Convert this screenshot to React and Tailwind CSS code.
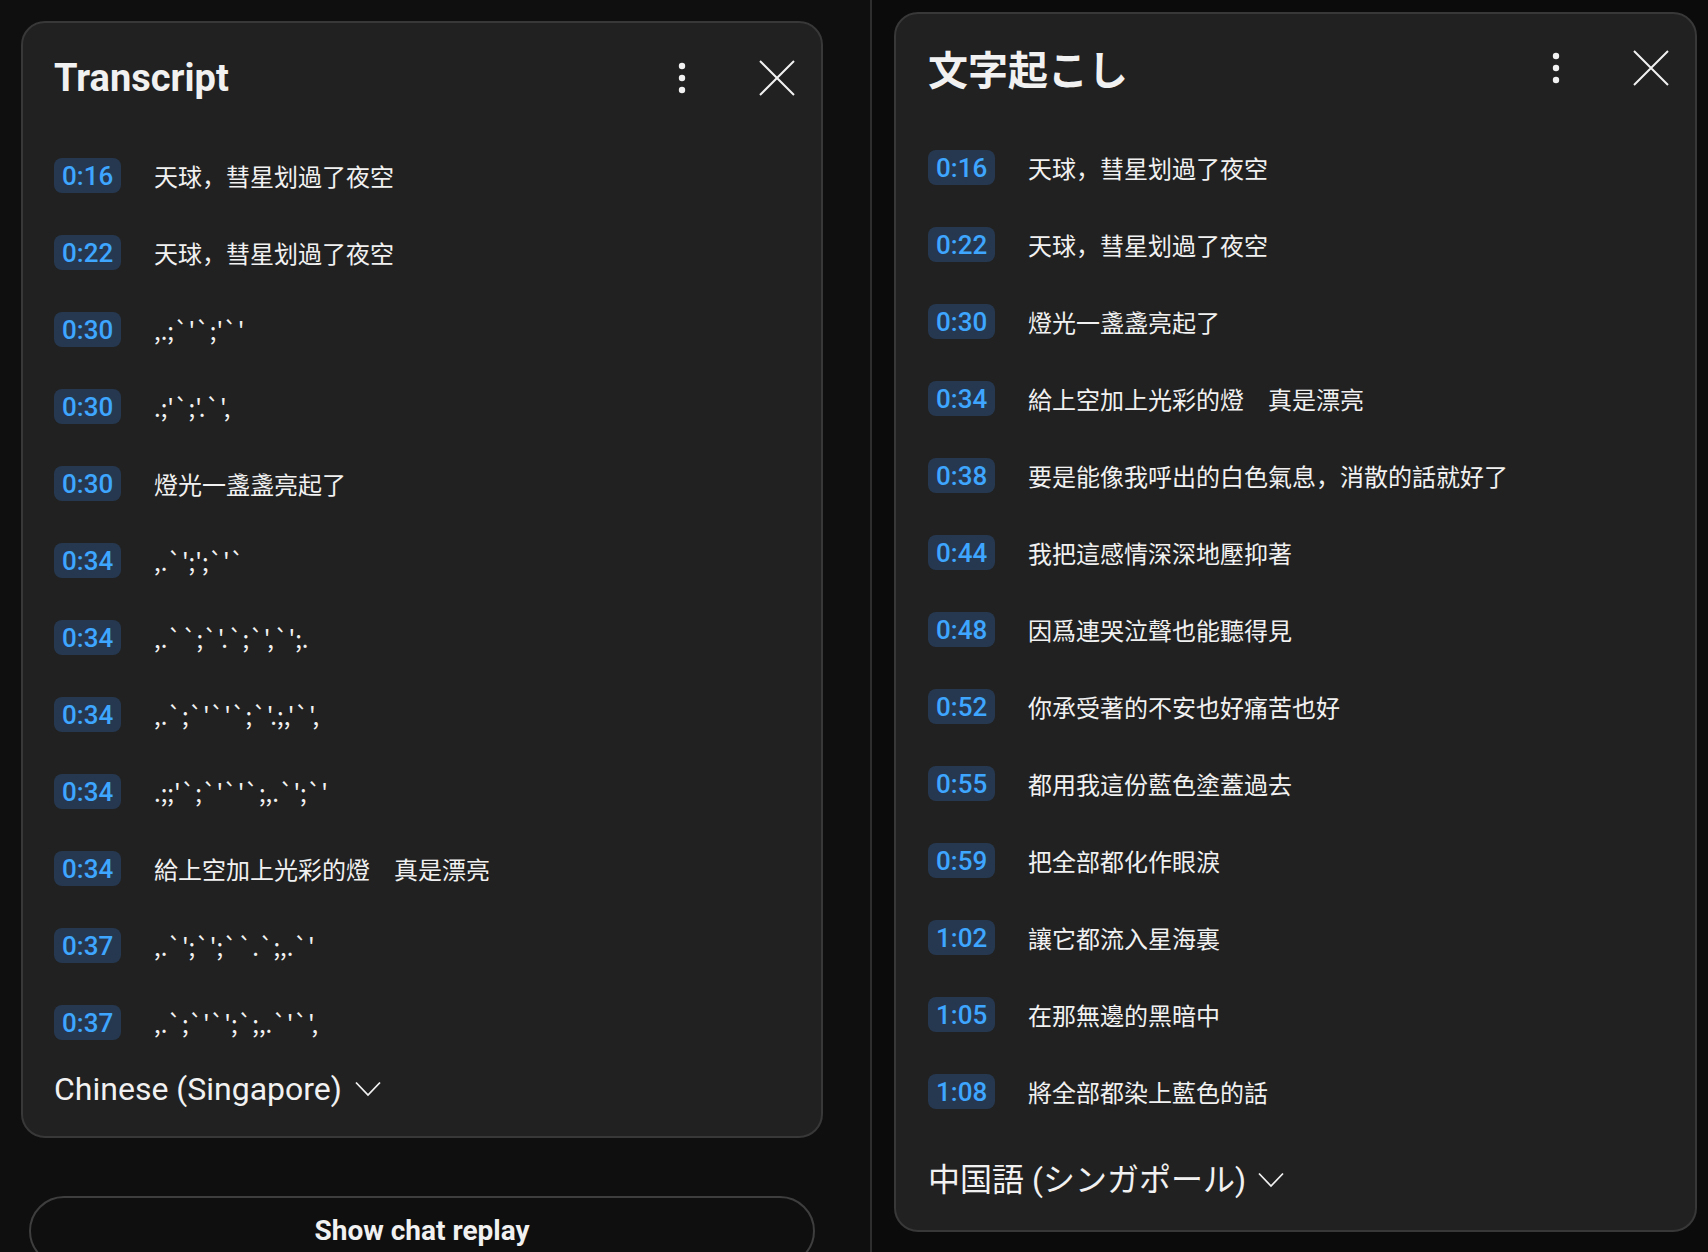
import React from "react";

const leftRows = [
  { t: "0:16", s: "天球，彗星划過了夜空" },
  { t: "0:22", s: "天球，彗星划過了夜空" },
  { t: "0:30", s: ",.;`'`;'`'", odd: true },
  { t: "0:30", s: ".;'`;'.`',", odd: true },
  { t: "0:30", s: "燈光一盞盞亮起了" },
  { t: "0:34", s: ",.`';';`'`", odd: true },
  { t: "0:34", s: ",.``;`'.`;`',`';.", odd: true },
  { t: "0:34", s: ",.`;`'`'`;`'.;,'`',", odd: true },
  { t: "0:34", s: ".;;'`;`'`'`;,.`';`'", odd: true },
  { t: "0:34", s: "給上空加上光彩的燈　真是漂亮" },
  { t: "0:37", s: ",.`';`';``.`;,.`'", odd: true },
  { t: "0:37", s: ",.`;`'`';`;,.`'`',", odd: true },
];

const rightRows = [
  { t: "0:16", s: "天球，彗星划過了夜空" },
  { t: "0:22", s: "天球，彗星划過了夜空" },
  { t: "0:30", s: "燈光一盞盞亮起了" },
  { t: "0:34", s: "給上空加上光彩的燈　真是漂亮" },
  { t: "0:38", s: "要是能像我呼出的白色氣息，消散的話就好了" },
  { t: "0:44", s: "我把這感情深深地壓抑著" },
  { t: "0:48", s: "因爲連哭泣聲也能聽得見" },
  { t: "0:52", s: "你承受著的不安也好痛苦也好" },
  { t: "0:55", s: "都用我這份藍色塗蓋過去" },
  { t: "0:59", s: "把全部都化作眼淚" },
  { t: "1:02", s: "讓它都流入星海裏" },
  { t: "1:05", s: "在那無邊的黑暗中" },
  { t: "1:08", s: "將全部都染上藍色的話" },
];

function Dots() {
  return (
    <svg width="10" height="34" viewBox="0 0 10 34">
      <circle cx="5" cy="5" r="3.2" fill="#f1f1f1" />
      <circle cx="5" cy="17" r="3.2" fill="#f1f1f1" />
      <circle cx="5" cy="29" r="3.2" fill="#f1f1f1" />
    </svg>
  );
}

function Close() {
  return (
    <svg width="36" height="36" viewBox="0 0 36 36">
      <path d="M1 1L35 35M35 1L1 35" stroke="#f1f1f1" strokeWidth="2" />
    </svg>
  );
}

function Chevron() {
  return (
    <svg width="26" height="16" viewBox="0 0 26 16">
      <path d="M1 1.5L13 14L25 1.5" fill="none" stroke="#f1f1f1" strokeWidth="1.8" />
    </svg>
  );
}

function Row({ row }) {
  return (
    <div className="flex items-center h-[77px]">
      <div className="w-[100px] flex">
        <span className="h-[35px] px-[8px] rounded-[8px] bg-[#263850] text-[#3ea6ff] text-[26px] font-medium leading-none flex items-center font-['Roboto',sans-serif]">
          {row.t}
        </span>
      </div>
      <span className="text-[24px] text-[#f1f1f1] font-['Noto_Sans_CJK_SC',sans-serif]">
        {row.s}
      </span>
    </div>
  );
}

function Header({ title, titleClass, height }) {
  return (
    <div className={`flex items-center ${height}`}>
      <h2 className={titleClass}>{title}</h2>
      <div className="flex-1" />
      <div className="w-[40px] flex justify-center">
        <Dots />
      </div>
      <div className="w-[40px] ml-[55px] flex justify-center">
        <Close />
      </div>
    </div>
  );
}

export default function App() {
  return (
    <div className="w-[1708px] h-[1252px] overflow-hidden flex bg-[#0f0f0f]">
      <div className="w-[870px] pt-[21px] pl-[21px] flex flex-col">
        <div className="w-[802px] rounded-[24px] border-2 border-[#383838] bg-[#212121] pl-[31px] pr-[24px] pb-[19px]">
          <Header
            title="Transcript"
            height="h-[110px]"
            titleClass="text-[38px] font-bold text-[#f1f1f1] font-['Roboto',sans-serif] leading-none"
          />
          <div className="pt-[4px]">
            {leftRows.map((r, i) => (
              <Row key={i} row={r} />
            ))}
          </div>
          <div className="h-[56px] flex items-center gap-[13px]">
            <span className="text-[32px] text-[#f1f1f1] font-['Roboto',sans-serif]">
              Chinese (Singapore)
            </span>
            <Chevron />
          </div>
        </div>
        <button className="mt-[58px] ml-[8px] w-[786px] h-[70px] shrink-0 rounded-full border-2 border-[#3e3e3e] text-[28px] font-bold text-[#f1f1f1] font-['Roboto',sans-serif]">
          Show chat replay
        </button>
      </div>
      <div className="w-[2px] bg-[#2e2e2e]" />
      <div className="flex-1 bg-[#0b0b0b] pt-[12px] pl-[22px]">
        <div className="w-[803px] rounded-[24px] border-2 border-[#383838] bg-[#212121] pl-[32px] pr-[24px]">
          <Header
            title="文字起こし"
            height="h-[108px]"
            titleClass="text-[40px] font-bold text-[#f1f1f1] font-['Noto_Sans_CJK_JP',sans-serif] leading-none"
          />
          <div className="pt-[7px]">
            {rightRows.map((r, i) => (
              <Row key={i} row={r} />
            ))}
          </div>
          <div className="h-[100px] flex items-center gap-[12px]">
            <span className="text-[32px] text-[#f1f1f1] font-['Roboto','Noto_Sans_CJK_JP',sans-serif]">
              中国語 (シンガポール)
            </span>
            <Chevron />
          </div>
        </div>
      </div>
    </div>
  );
}
